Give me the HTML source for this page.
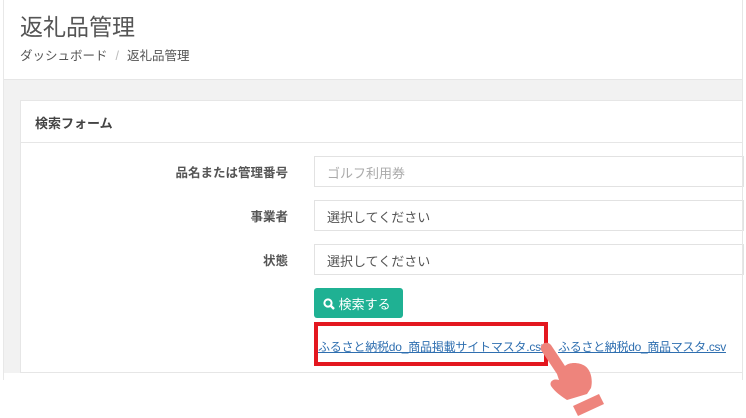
<!DOCTYPE html>
<html><head><meta charset="utf-8"><style>
*{box-sizing:border-box;margin:0;padding:0}
body{width:746px;height:418px;overflow:hidden;background:#fff;font-family:"Liberation Sans","Noto Sans CJK JP",sans-serif;position:relative}
.top{position:absolute;left:4px;top:0;width:738px;height:80px;background:#fff;border-bottom:1px solid #e6e6e6}
h1{position:absolute;left:20px;top:8px;font-size:23px;font-weight:normal;color:#555}
.bc{position:absolute;left:20px;top:45px;font-size:12.5px;color:#555}
.bc span{color:#bbb;margin:0 8px}
.grey{position:absolute;left:4px;top:80px;width:738px;height:293px;background:#f2f2f2}
.shadow{position:absolute;left:3px;top:0;width:1px;height:380px;background:#e8e8e8}
.card{position:absolute;left:20px;top:100px;width:722px;height:273px;background:#fff;border:1px solid #e6e6e6;border-right:none}
.ch{height:42px;border-bottom:1px solid #e6e6e6;padding:12px 14px;font-size:13px;font-weight:bold;color:#444}
.lbl{position:absolute;right:0;width:288px;text-align:right;font-size:12.5px;font-weight:bold;color:#555;left:0}
.inp{position:absolute;left:314px;width:430px;height:31px;border:1px solid #e2e2e2;font-size:13px;padding:6px 12px;color:#555}
.btn{position:absolute;left:314px;top:288px;width:89px;height:30px;background:#1fb193;border-radius:3px;color:#fff;font-size:13px;padding:6px 9px}
.red{position:absolute;left:314px;top:322px;width:234px;height:44px;border:4px solid #e3171f}
.lk{position:absolute;top:338px;font-size:12px;color:#2f6fb0;text-decoration:underline;white-space:nowrap}
.vl{position:absolute;left:742px;top:0;width:1px;height:380px;background:#e6e6e6}
</style></head><body>
<div class="shadow"></div>
<div class="top"></div>
<h1>返礼品管理</h1>
<div class="bc">ダッシュボード<span>/</span>返礼品管理</div>
<div class="grey"></div>
<div class="card"><div class="ch">検索フォーム</div></div>
<div class="lbl" style="top:162px">品名または管理番号</div>
<div class="lbl" style="top:206px">事業者</div>
<div class="lbl" style="top:250px">状態</div>
<div class="inp" style="top:156px;color:#aaa">ゴルフ利用券</div>
<div class="inp" style="top:200px">選択してください</div>
<div class="inp" style="top:244px">選択してください</div>
<div class="btn"><svg width="12" height="12" viewBox="0 0 12 12" style="vertical-align:-1px"><circle cx="5" cy="5" r="3.6" fill="none" stroke="#fff" stroke-width="2"/><path d="M7.5 7.5L11 11" stroke="#fff" stroke-width="2.4"/></svg> 検索する</div>
<div class="red"></div>
<div class="lk" style="left:318px;letter-spacing:-0.2px">ふるさと納税do_商品掲載サイトマスタ.csv</div>
<div class="lk" style="left:558px;letter-spacing:-0.3px">ふるさと納税do_商品マスタ.csv</div>
<div class="vl"></div>
<svg style="position:absolute;left:535px;top:336px" width="80" height="82" viewBox="0 0 80 82">
<path d="M6 14 C4 8 12 4 16 9 L30 30 C34 26 44 26 50 30 C56 34 58 44 56 52 L52 58 L32 64 C26 60 20 56 16 50 C14 46 18 42 24 44 L22 38 Z" fill="#ee847c"/>
<path d="M38 70 L64 58 L69 68 L43 80 Z" fill="#ee847c"/>
</svg>
</body></html>
